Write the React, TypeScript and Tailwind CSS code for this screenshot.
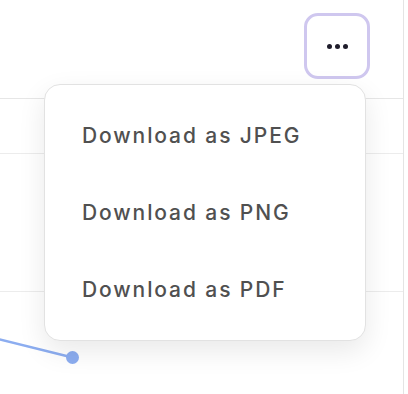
import React from 'react';

const options = ['Download as JPEG', 'Download as PNG', 'Download as PDF'];

export default function App() {
  return (
    <div className="relative h-[394px] w-[408px] overflow-hidden bg-white" style={{ fontFamily: 'Inter, "Noto Sans", sans-serif' }}>
      {/* Card */}
      <div className="flex h-full w-[404px] flex-col border-r border-[#e4e4e4]">
        {/* Header */}
        <div className="flex h-[99px] shrink-0 items-start justify-end border-b border-[#e6e6e6] pt-[13px] pr-[33px]">
          <button className="flex h-[66px] w-[66px] items-center justify-center gap-[3px] rounded-[14px] border-[3px] border-[#cfc7ef] bg-white">
            <span className="h-[5px] w-[5px] rounded-full bg-[#1f1d2b]" />
            <span className="h-[5px] w-[5px] rounded-full bg-[#1f1d2b]" />
            <span className="h-[5px] w-[5px] rounded-full bg-[#1f1d2b]" />
          </button>
        </div>

        {/* Chart area */}
        <div className="relative flex-1">
          <div className="h-[55px] border-b border-[#ececec]" />
          <div className="h-[138px] border-b border-[#ececec]" />
          <svg className="absolute left-0 top-0" width="404" height="295" viewBox="0 0 404 295">
            <line x1="-2" y1="240" x2="72.5" y2="258.5" stroke="#8cadf0" strokeWidth="2.5" />
            <circle cx="72.5" cy="258.5" r="6.5" fill="#8cadf0" />
          </svg>
        </div>
      </div>

      {/* Dropdown menu */}
      <div className="absolute left-[44px] top-[84px] flex w-[322px] flex-col rounded-[16px] border border-[#e2e2e2] bg-white py-[12px] shadow-[0_10px_28px_rgba(0,0,0,0.09)]">
        {options.map((o) => (
          <div key={o} className="flex h-[77px] items-center pl-[37px] text-[21px] font-medium tracking-[1.9px] text-[#505050]">
            {o}
          </div>
        ))}
      </div>
    </div>
  );
}
